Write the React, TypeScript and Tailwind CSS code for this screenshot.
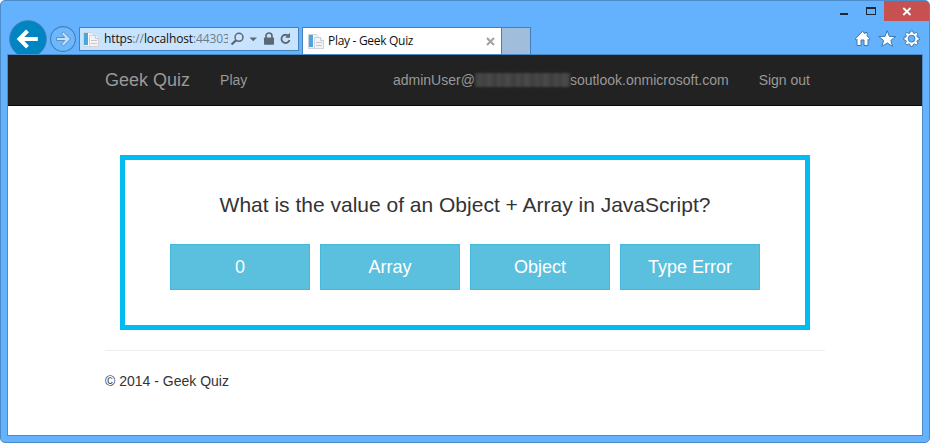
import type { ReactNode } from "react";

function PageIcon() {
  return (
    <svg width="16" height="17" viewBox="0 0 16 17" className="shrink-0">
      <path d="M0.5 1.5h8l2 2v12h-10z" fill="#eef1f5" stroke="#ccd3dc" />
      <rect x="1" y="2" width="4" height="12" fill="#4da6d9" />
      <rect x="5" y="2" width="1" height="13" fill="#fff" />
      <path d="M6.500 4.500h6l3 3v8h-9z" fill="#f3f3f6" stroke="#cfd2d9" />
      <path d="M12.500 4.500v3h3" fill="#fff" stroke="#c5c9d2" />
      <path d="M8 9.500h6M8 12.500h6" stroke="#c3c8d4" />
    </svg>
  );
}

function BackButton() {
  return (
    <svg width="38" height="34" viewBox="0 0 38 34" className="mt-[19px] shrink-0">
      <circle cx="19" cy="19" r="18.3" fill="#0085c3" stroke="#3c7eb4" />
      <path d="M28.800 19H12M18.500 10.800L10.500 19l8 8.200" fill="none" stroke="#fff" strokeWidth="4" />
    </svg>
  );
}

function ForwardButton() {
  return (
    <svg width="26" height="26" viewBox="0 0 26 26" className="mt-[25px] ml-[3px] shrink-0">
      <circle cx="13" cy="13" r="12.400" fill="#6db7fc" stroke="#447fba" strokeWidth="1.1" />
      <path d="M6.500 11.500h8.300l-3.500-3.800 2.200-1.700 7 7-7 7-2.200-1.700 3.500-3.800H6.500z" fill="#c2e0fc" stroke="#5089c1" strokeWidth="0.9" />
    </svg>
  );
}

function AddressBar() {
  return (
    <div className="mt-[26px] ml-[3px] flex h-6 w-[220px] shrink-0 items-center border border-[#4280b9] bg-[#c8e3fd] pl-[3px] text-[#5a6876]">
      <PageIcon />
      <div className="ml-[5px] w-[125px] overflow-hidden text-[12px] leading-[22px] tracking-[-0.13px] whitespace-nowrap text-[#6d7d8c]">
        <span className="text-[#111]">https</span>://<span className="text-[#111]">localhost</span>:44303/
      </div>
      <svg width="68" height="16" viewBox="0 0 68 16" className="ml-[2px] shrink-0">
        <circle cx="9" cy="6.300" r="4" fill="none" stroke="currentColor" strokeWidth="1.500" />
        <path d="M6 9.400L1.500 13.500" stroke="currentColor" strokeWidth="2.200" />
        <path d="M19.500 6.500h7.500l-3.750 3.700z" fill="currentColor" />
        <path d="M36 7V5a3 3 0 0 1 6 0v2" fill="none" stroke="currentColor" strokeWidth="1.700" />
        <rect x="34" y="6.500" width="10" height="7.300" rx="0.700" fill="currentColor" />
        <path d="M58.600 5.100A4.100 4.100 0 1 0 59.500 9" fill="none" stroke="currentColor" strokeWidth="1.800" />
        <path d="M60 1.800v5h-5z" fill="currentColor" />
      </svg>
    </div>
  );
}

function WindowTools() {
  return (
    <div className="ml-auto flex shrink-0 flex-col items-end">
      <div className="flex h-5">
        <svg width="48" height="20" viewBox="0 0 48 20">
          <rect x="4" y="12" width="8" height="2" fill="#1d2833" />
          <path d="M30 6h10v8H30zM31 8v5h8V8z" fill="#1d2833" fillRule="evenodd" />
        </svg>
        <div className="flex w-[45px] justify-center bg-[#c75050]">
          <svg width="45" height="20" viewBox="0 0 45 20">
            <path d="M19.300 7l7.200 7M26.500 7l-7.200 7" stroke="#fff" strokeWidth="1.800" />
          </svg>
        </div>
      </div>
      <svg width="68" height="18" viewBox="0 0 68 18" className="mt-[9px] mr-[7px]">
        <g fill="#fff" stroke="#3d78ae" strokeWidth="1" strokeLinejoin="round">
          <path d="M1.200 9L8.500 1.300l2.500 2.500V2.500h2.200V6l3 3-1.300 1.200-.9-.9v6.200h-4V10H7v5.500H3V9.300l-.8.900z" />
          <path d="M33.200.7l2.200 5.700 6.300.1-4.900 3.900 1.800 6-5.400-3.400-5.300 3.400 1.700-6-4.800-3.900 6.200-.1z" />
          <path
            fillRule="evenodd"
            d="M56.300 1h2.600l.3 1.900 1.300.6 1.700-1.200 1.800 1.800-1.200 1.700.6 1.300 1.900.3v2.600l-1.900.3-.6 1.300 1.200 1.700-1.800 1.800-1.700-1.200-1.300.6-.3 1.900h-2.600l-.3-1.900-1.300-.6L53 15.100l-1.800-1.800 1.200-1.700-.6-1.300-1.900-.3V7.400l1.900-.3.600-1.300-1.200-1.700L53 2.300l1.700 1.200 1.300-.6zM61 8.700a3.400 3.400 0 1 0-6.800 0 3.400 3.400 0 1 0 6.800 0z"
          />
        </g>
      </svg>
    </div>
  );
}

function BrowserBar() {
  return (
    <header className="flex h-[53px] items-start overflow-hidden pl-2 font-['Open_Sans','Noto_Sans',sans-serif]">
      <BackButton />
      <ForwardButton />
      <AddressBar />
      <div className="mt-[26px] ml-[3px] flex h-[27px] w-[200px] shrink-0 items-center border border-b-0 border-[#4280b9] bg-white pl-[5px]">
        <PageIcon />
        <span className="ml-1 text-[12px] tracking-[-0.3px] whitespace-nowrap text-[#111]">Play - Geek Quiz</span>
        <svg width="9" height="9" viewBox="0 0 9 9" className="mr-[6px] ml-auto">
          <path d="M1 1l7 7M8 1L1 8" stroke="#a3a3a3" strokeWidth="2.100" />
        </svg>
      </div>
      <div className="mt-[26px] h-[27px] w-[29px] shrink-0 border border-b-0 border-l-0 border-[#4280b9] bg-[#a0bedb]" />
      <WindowTools />
    </header>
  );
}

function Answer({ children }: { children: ReactNode }) {
  return (
    <button className="h-[46px] w-[140px] border border-[#46b8da] bg-[#5bc0de] text-[18px] leading-6 text-white">
      {children}
    </button>
  );
}

export default function App() {
  return (
    <div className="h-[443px] w-[930px] overflow-hidden rounded-[5px] border border-[#4b8bc8] bg-[#64b2fd]">
      <BrowserBar />
      <div className="mx-[6px] h-[382px] border border-[#4b8bc8] bg-white font-['Liberation_Sans',Arial,sans-serif] text-[14px] text-[#333]">
        <nav className="flex h-[51px] items-center border-b border-[#080808] bg-[#222] pr-28 pl-[97px] text-[#999]">
          <span className="text-[18px] whitespace-nowrap">Geek Quiz</span>
          <span className="ml-[30px]">Play</span>
          <span className="ml-auto flex items-center whitespace-nowrap">
            adminUser@
            <span className="h-[14px] w-[95px] bg-[repeating-linear-gradient(90deg,#3c3c3c_0px,#484848_5px,#404040_9px,#4b4b4b_14px,#3e3e3e_19px)] blur-[1px]" />
            <span>soutlook.onmicrosoft.com</span>
          </span>
          <span className="ml-[30px] whitespace-nowrap">Sign out</span>
        </nav>
        <main className="ml-[97px] w-[720px] pt-[49px]">
          <section className="mx-[15px] flex h-[175px] flex-col items-center border-[5px] border-[#00bcf2] pt-[29px]">
            <h1 className="text-[21px] leading-8 whitespace-nowrap">What is the value of an Object + Array in JavaScript?</h1>
            <div className="mt-[23px] flex gap-[10px]">
              <Answer>0</Answer>
              <Answer>Array</Answer>
              <Answer>Object</Answer>
              <Answer>Type Error</Answer>
            </div>
          </section>
          <hr className="mt-5 border-t border-[#eee]" />
          <footer className="mt-5 leading-5">© 2014 - Geek Quiz</footer>
        </main>
      </div>
    </div>
  );
}
